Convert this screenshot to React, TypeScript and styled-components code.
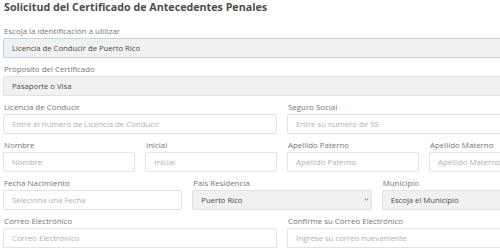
import styled, { createGlobalStyle } from "styled-components";

const GlobalStyle = createGlobalStyle`
  html, body {
    margin: 0;
    padding: 0;
    background: #ffffff;
    overflow: hidden;
  }
  body {
    font-family: "Open Sans", "Liberation Sans", sans-serif;
  }
`;

export default function App() {
  return (
    <>
      <GlobalStyle />
      <Page>
        <Title>Solicitud del Certificado de Antecedentes Penales</Title>

        <Row $cols={1}>
          <Field>
            <Label>Escoja la identificación a utilizar</Label>
            <SelectBox value="licencia" $focused onChange={() => {}}>
              <option value="licencia">Licencia de Conducir de Puerto Rico</option>
            </SelectBox>
          </Field>
        </Row>

        <Row $cols={1}>
          <Field>
            <Label>Proposito del Certificado</Label>
            <SelectBox value="pasaporte" onChange={() => {}}>
              <option value="pasaporte">Pasaporte o Visa</option>
            </SelectBox>
          </Field>
        </Row>

        <Row $cols={2}>
          <Field>
            <Label>Licencia de Conducir</Label>
            <Input placeholder="Entre el número de Licencia de Conducir" />
          </Field>
          <Field>
            <Label>Seguro Social</Label>
            <Input placeholder="Entre su numero de SS" />
          </Field>
        </Row>

        <Row $cols={4}>
          <Field>
            <Label>Nombre</Label>
            <Input placeholder="Nombre" />
          </Field>
          <Field>
            <Label>Inicial</Label>
            <Input placeholder="Inicial" />
          </Field>
          <Field>
            <Label>Apellido Paterno</Label>
            <Input placeholder="Apellido Paterno" />
          </Field>
          <Field>
            <Label>Apellido Materno</Label>
            <Input placeholder="Apellido Materno" />
          </Field>
        </Row>

        <Row $cols={3}>
          <Field>
            <Label>Fecha Nacimiento</Label>
            <Input placeholder="Seleciona una Fecha" />
          </Field>
          <Field>
            <Label>Pais Residencia</Label>
            <SelectWrap>
              <SelectBox value="pr" onChange={() => {}}>
                <option value="pr">Puerto Rico</option>
              </SelectBox>
              <Chevron viewBox="0 0 10 6">
                <path d="M1.5 1.5 L5 4.5 L8.5 1.5" />
              </Chevron>
            </SelectWrap>
          </Field>
          <Field>
            <Label>Municipio</Label>
            <SelectWrap>
              <SelectBox value="none" onChange={() => {}}>
                <option value="none">Escoja el Municipio</option>
              </SelectBox>
              <Chevron viewBox="0 0 10 6">
                <path d="M1.5 1.5 L5 4.5 L8.5 1.5" />
              </Chevron>
            </SelectWrap>
          </Field>
        </Row>

        <Row $cols={2}>
          <Field>
            <Label>Correo Electrónico</Label>
            <Input placeholder="Correo Electrónico" />
          </Field>
          <Field>
            <Label>Confirme su Correo Electrónico</Label>
            <Input placeholder="Ingrese su correo nuevamente" />
          </Field>
        </Row>
      </Page>
    </>
  );
}

const Page = styled.div`
  width: 558px;
  padding: 0 0 0 3px;
`;

const Title = styled.h1`
  margin: 0 0 11px 1px;
  font-family: "Open Sans", sans-serif;
  font-weight: 700;
  font-size: 10.7px;
  line-height: 15px;
  color: #4d4d4d;
`;

const Row = styled.div<{ $cols: number }>`
  display: grid;
  grid-template-columns: repeat(${(p) => p.$cols}, 1fr);
  column-gap: 10px;
  margin-bottom: 6px;
`;

const Field = styled.div`
  display: flex;
  flex-direction: column;
  min-width: 0;
`;

const Label = styled.label`
  display: block;
  height: 12px;
  font-family: "Open Sans", sans-serif;
  font-size: 7.9px;
  line-height: 11px;
  color: #767676;
  padding-left: 1px;
`;

const Input = styled.input`
  display: block;
  box-sizing: border-box;
  width: 100%;
  height: 20px;
  margin: 0;
  padding: 0 8px;
  border: 1px solid #e2e2e2;
  border-radius: 2px;
  background: #ffffff;
  font-family: "Open Sans", sans-serif;
  font-size: 7.8px;
  color: #444;
  outline: none;

  &::placeholder {
    color: #afafaf;
  }
`;

const SelectWrap = styled.div`
  position: relative;
`;

const SelectBox = styled.select<{ $focused?: boolean }>`
  display: block;
  appearance: none;
  -webkit-appearance: none;
  box-sizing: border-box;
  width: 100%;
  height: 20px;
  margin: 0;
  padding: 0 8px;
  border: 1px solid ${(p) => (p.$focused ? "#b9d8f2" : "#e3e3e3")};
  border-radius: 2px;
  background: #f1f1f1;
  font-family: "Open Sans", sans-serif;
  font-size: 7.7px;
  font-weight: 400;
  color: #4a4a4a;
  outline: none;
`;

const Chevron = styled.svg`
  position: absolute;
  right: 3px;
  top: 8px;
  width: 5px;
  height: 3px;
  fill: none;
  stroke: #555;
  stroke-width: 1.4;
  pointer-events: none;
`;
